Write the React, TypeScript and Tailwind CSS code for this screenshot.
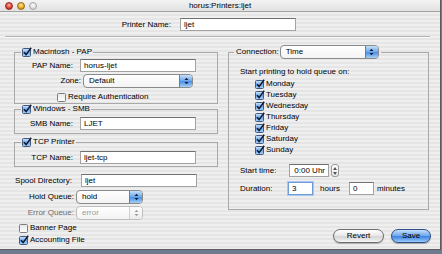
import type { ReactNode } from "react";

const stripes =
  "bg-[repeating-linear-gradient(180deg,#efefef_0px,#efefef_2px,#e5e5e5_2px,#e5e5e5_4px)]";

function Box({ checked = false }: { checked?: boolean }) {
  return (
    <svg width="10" height="10" viewBox="0 0 10 10" className="shrink-0">
      <rect
        x="0.5"
        y="1.5"
        width="8"
        height="8"
        rx="1"
        fill={checked ? "url(#cbBlue)" : "url(#cbWhite)"}
        stroke={checked ? "#44597f" : "#7d7d7d"}
      />
      {checked ? (
        <path d="M2 5.2 L4.1 7.6 L9.2 0.8" stroke="#101830" strokeWidth="1.5" fill="none" />
      ) : null}
    </svg>
  );
}

function Field({ value, className, focus = false }: { value: string; className: string; focus?: boolean }) {
  return (
    <div
      className={`flex h-[13px] shrink-0 items-center bg-white px-[3px] leading-none ${
        focus ? "border border-[#6d9bdc] shadow-[0_0_0_1px_#a9c7ef]" : "border border-[#a2a2a2] border-t-[#707070]"
      } ${className}`}
    >
      {value}
    </div>
  );
}

function Popup({ value, className, disabled = false }: { value: string; className: string; disabled?: boolean }) {
  return (
    <div
      className={`flex h-[14px] shrink-0 items-stretch overflow-hidden rounded-[4px] border bg-[linear-gradient(#ffffff,#f3f3f3)] leading-none ${
        disabled ? "border-[#bdbdbd] text-[#9b9b9b]" : "border-[#8a8a8a] text-black"
      } ${className}`}
    >
      <span className="flex flex-1 items-center pl-[5px]">{value}</span>
      <span
        className={`flex w-[13px] items-center justify-center border-l ${
          disabled
            ? "border-[#cfcfcf] bg-[linear-gradient(#ffffff,#ececec)]"
            : "border-[#5a7fb8] bg-[linear-gradient(#c6e0fb,#6aa5ea_50%,#4b8fe4_55%,#a7d0f8)]"
        }`}
      >
        <svg width="5" height="8" viewBox="0 0 5 8">
          <path d="M0.5 3 L2.5 0.8 L4.5 3 Z M0.5 5 L2.5 7.2 L4.5 5 Z" fill={disabled ? "#a0a0a0" : "#13203a"} />
        </svg>
      </span>
    </div>
  );
}

function Legend({ children }: { children: ReactNode }) {
  return (
    <legend className="ml-[6px] px-[1px]">
      <div className="flex h-[10px] items-center gap-[1px] leading-none">{children}</div>
    </legend>
  );
}

function Row({ label, labelW, gap, children, className = "" }: { label: string; labelW: string; gap: string; children: ReactNode; className?: string }) {
  return (
    <div className={`flex items-center leading-none ${className}`}>
      <span className={`shrink-0 text-right ${labelW} ${gap}`}>{label}</span>
      {children}
    </div>
  );
}

function Light({ color }: { color: string }) {
  return <span className={`h-[8px] w-[8px] rounded-full ${color}`} />;
}

const days = ["Monday", "Tuesday", "Wednesday", "Thursday", "Friday", "Saturday", "Sunday"];

export default function App() {
  return (
    <div className="h-[254px] w-[442px] overflow-hidden bg-[#6f7a8e] font-['Liberation_Sans',Arial,sans-serif] text-[8px] text-black">
      <svg width="0" height="0" className="absolute">
        <defs>
          <linearGradient id="cbBlue" x1="0" y1="0" x2="0" y2="1">
            <stop offset="0" stopColor="#d4e8fd" />
            <stop offset="0.5" stopColor="#6ea8ea" />
            <stop offset="1" stopColor="#a9d2f8" />
          </linearGradient>
          <linearGradient id="cbWhite" x1="0" y1="0" x2="0" y2="1">
            <stop offset="0" stopColor="#e8e8e8" />
            <stop offset="1" stopColor="#ffffff" />
          </linearGradient>
        </defs>
      </svg>

      <div className={`flex h-[250px] w-[441px] flex-col border-r border-b border-[#5c5c5c] ${stripes}`}>
        {/* title bar */}
        <div className="relative flex h-[12px] shrink-0 items-center border-b border-[#a3a3a3] bg-[linear-gradient(#f2f2f2,#e2e2e2)]">
          <div className="ml-[5px] flex gap-[4px]">
            <Light color="bg-[radial-gradient(circle_at_50%_35%,#ffb2a8,#e0392e_60%,#a3170f)] border border-[#8e2a22]" />
            <Light color="bg-[radial-gradient(circle_at_50%_35%,#ffeaa0,#e6a614_60%,#a86f05)] border border-[#946a14]" />
            <Light color="bg-[radial-gradient(circle_at_50%_35%,#ffffff,#dcdcdc_60%,#b8b8b8)] border border-[#a6a6a6]" />
          </div>
          <span className="absolute left-0 right-0 text-center leading-none">horus:Printers:ljet</span>
        </div>

        {/* printer name */}
        <Row label="Printer Name:" labelW="w-[171px]" gap="mr-[9px]" className="mt-[6px]">
          <Field value="ljet" className="w-[116px]" />
        </Row>

        <div className="mx-[5px] mt-[5px] h-[2px] w-[425px] border-t border-b border-t-[#b4b4b4] border-b-[#fbfbfb]" />

        <div className="flex items-start">
          {/* left column */}
          <div className="ml-[14px] flex w-[204px] flex-col">
            <fieldset className="mt-[9px] min-w-0 border border-[#a9a9a9] pb-[1px]">
              <Legend>
                <Box checked />
                <span>Macintosh - PAP</span>
              </Legend>
              <Row label="PAP Name:" labelW="w-[58px]" gap="mr-[7px]" className="mt-[2px]">
                <Field value="horus-ljet" className="w-[116px]" />
              </Row>
              <Row label="Zone:" labelW="w-[66px]" gap="mr-[2px]" className="mt-[2px]">
                <Popup value="Default" className="w-[110px]" />
              </Row>
              <div className="mt-[4px] flex h-[10px] items-center gap-[1px] pl-[42px] leading-none">
                <Box />
                <span>Require Authentication</span>
              </div>
            </fieldset>

            <fieldset className="min-w-0 border border-[#a9a9a9] pb-[3px]">
              <Legend>
                <Box checked />
                <span>Windows - SMB</span>
              </Legend>
              <Row label="SMB Name:" labelW="w-[58px]" gap="mr-[7px]" className="mt-[3px]">
                <Field value="LJET" className="w-[116px]" />
              </Row>
            </fieldset>

            <fieldset className="mt-[3px] min-w-0 border border-[#a9a9a9] pb-[2px]">
              <Legend>
                <Box checked />
                <span>TCP Printer</span>
              </Legend>
              <Row label="TCP Name:" labelW="w-[58px]" gap="mr-[7px]" className="mt-[4px]">
                <Field value="ljet-tcp" className="w-[116px]" />
              </Row>
            </fieldset>

            <Row label="Spool Directory:" labelW="w-[58px]" gap="mr-[9px]" className="mt-[7px]">
              <Field value="ljet" className="w-[116px]" />
            </Row>
            <Row label="Hold Queue:" labelW="w-[60px]" gap="mr-[2px]" className="mt-[3px]">
              <Popup value="hold" className="w-[67px]" />
            </Row>
            <Row label="Error Queue:" labelW="w-[60px] text-[#6f6f6f]" gap="mr-[2px]" className="mt-[2px]">
              <Popup value="error" className="w-[67px]" disabled />
            </Row>
            <div className="mt-[3px] flex h-[10px] items-center gap-[1px] pl-[5px] leading-none">
              <Box />
              <span>Banner Page</span>
            </div>
            <div className="mt-[2px] flex h-[10px] items-center gap-[1px] pl-[5px] leading-none">
              <Box checked />
              <span>Accounting File</span>
            </div>
          </div>

          {/* right column */}
          <div className="ml-[10px] flex w-[201px] flex-col">
            <fieldset className="mt-[7px] min-w-0 border border-[#a9a9a9] pb-[14px]">
              <legend className="ml-[5px] px-[2px]">
                <div className="flex h-[14px] items-center leading-none">
                  <span className="mr-[1px]">Connection:</span>
                  <Popup value="Time" className="w-[99px]" />
                </div>
              </legend>
              <div className="mt-[8px] flex h-[10px] items-center pl-[11px] leading-none">
                Start printing to hold queue on:
              </div>
              <div className="mt-[1px] flex flex-col pl-[26px]">
                {days.map((d) => (
                  <div key={d} className="flex h-[11px] items-center gap-[1px] leading-none">
                    <Box checked />
                    <span>{d}</span>
                  </div>
                ))}
              </div>
              <div className="mt-[9px] flex items-center pl-[11px] leading-none">
                <span className="w-[49px] shrink-0">Start time:</span>
                <Field value="0:00 Uhr" className="w-[40px] justify-end pr-[3px]" />
                <div className="ml-[2px] flex h-[13px] w-[8px] flex-col items-center justify-center gap-[2px] rounded-[3px] border border-[#9a9a9a] bg-[linear-gradient(#ffffff,#e8e8e8)]">
                  <svg width="4" height="3" viewBox="0 0 4 3">
                    <path d="M0 3 L2 0 L4 3 Z" fill="#555" />
                  </svg>
                  <svg width="4" height="3" viewBox="0 0 4 3">
                    <path d="M0 0 L2 3 L4 0 Z" fill="#555" />
                  </svg>
                </div>
              </div>
              <div className="mt-[5px] flex items-center pl-[11px] leading-none">
                <span className="w-[48px] shrink-0">Duration:</span>
                <Field value="3" className="w-[25px]" focus />
                <span className="ml-[7px] w-[29px]">hours</span>
                <Field value="0" className="w-[25px]" />
                <span className="ml-[3px]">minutes</span>
              </div>
            </fieldset>

            <div className="-mr-[2px] mt-[19px] flex justify-end gap-[7px] leading-none">
              <button className="flex h-[14px] w-[51px] items-center justify-center rounded-full border border-[#6e6e6e] bg-[linear-gradient(#ffffff,#e6e6e6_50%,#d4d4d4_55%,#f6f6f6)] shadow-[0_1px_1px_rgba(0,0,0,0.25)]">
                Revert
              </button>
              <button className="flex h-[14px] w-[40px] items-center justify-center rounded-full border border-[#2f4f86] bg-[linear-gradient(#c3defb,#6aa6ec_50%,#3c83e2_55%,#9bcaf8)] shadow-[0_1px_1px_rgba(0,0,0,0.3)]">
                Save
              </button>
            </div>
          </div>
        </div>
      </div>
    </div>
  );
}
